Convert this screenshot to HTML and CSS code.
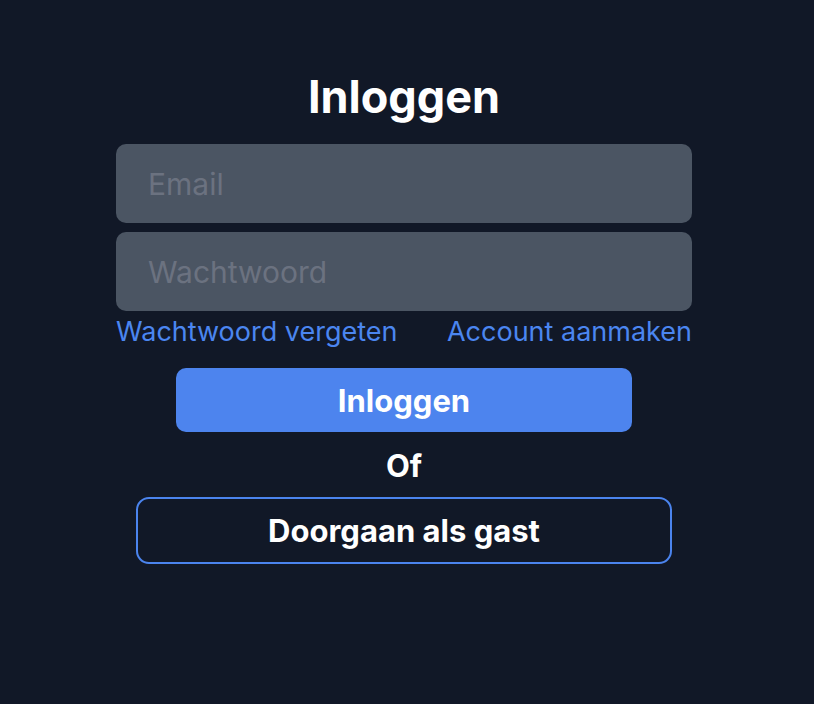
FILE: index.html
```html
<!DOCTYPE html>
<html lang="nl">
<head>
<meta charset="utf-8">
<title>Inloggen</title>
<link rel="stylesheet" href="styles.css">
</head>
<body>
<main class="card">
  <h1 class="title">Inloggen</h1>
  <input class="field" type="email" placeholder="Email">
  <input class="field field-second" type="password" placeholder="Wachtwoord">
  <div class="links">
    <a class="link" href="#">Wachtwoord vergeten</a>
    <a class="link" href="#">Account aanmaken</a>
  </div>
  <button class="btn-primary" type="button">Inloggen</button>
  <div class="or">Of</div>
  <button class="btn-outline" type="button">Doorgaan als gast</button>
</main>
</body>
</html>
```

FILE: styles.css
```css
html, body {
  margin: 0;
  padding: 0;
  background: #111827;
  height: 100%;
}
body {
  font-family: Inter, "Noto Sans", sans-serif;
  color: #ffffff;
}
.card {
  width: 576px;
  margin-left: 116px;
  padding-top: 71px;
  display: flex;
  flex-direction: column;
  align-items: center;
}
.title {
  margin: 0;
  font-size: 45px;
  line-height: 52px;
  font-weight: 700;
}
.field {
  box-sizing: border-box;
  width: 100%;
  height: 79px;
  margin-top: 21px;
  padding: 0 32px;
  border: none;
  border-radius: 10px;
  background: #4b5563;
  color: #e5e7eb;
  font-family: inherit;
  font-size: 30px;
  outline: none;
}
.field::placeholder {
  color: #6b7280;
}
.field-second {
  margin-top: 9px;
}
.links {
  width: 100%;
  display: flex;
  justify-content: space-between;
  margin-top: 3px;
  line-height: 36px;
  font-size: 27px;
}
.link {
  color: #4b86f0;
  text-decoration: none;
}
.btn-primary {
  width: 456px;
  height: 64px;
  margin-top: 18px;
  border: none;
  border-radius: 10px;
  background: #4d84ee;
  color: #ffffff;
  font-family: inherit;
  font-size: 31px;
  font-weight: 700;
}
.or {
  margin-top: 16px;
  font-size: 31px;
  font-weight: 700;
  line-height: 36px;
}
.btn-outline {
  box-sizing: border-box;
  width: 536px;
  height: 67px;
  margin-top: 13px;
  border: 2px solid #4b84ee;
  border-radius: 13px;
  background: transparent;
  color: #ffffff;
  font-family: inherit;
  font-size: 31px;
  font-weight: 700;
}
```
